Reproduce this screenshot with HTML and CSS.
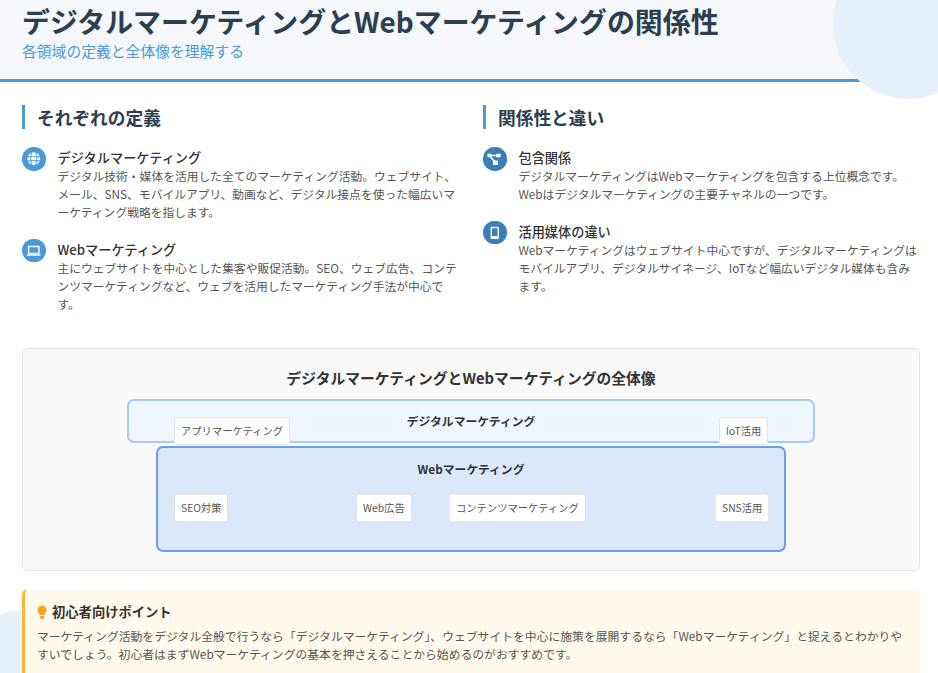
FILE: index.html
```html
<!DOCTYPE html>
<html lang="ja">
<head>
<meta charset="utf-8">
<title>デジタルマーケティングとWebマーケティングの関係性</title>
<link rel="stylesheet" href="styles.css">
</head>
<body>
<div class="slide">
  <div class="deco deco-top"></div>
  <div class="deco deco-bottom"></div>
  <header class="header">
    <h1 class="title">デジタルマーケティングとWebマーケティングの関係性</h1>
    <p class="subtitle">各領域の定義と全体像を理解する</p>
  </header>
  <main class="content">
    <div class="columns">
      <section>
        <h2 class="section-title">それぞれの定義</h2>
        <div class="item">
          <span class="icon">
            <svg viewBox="0 0 24 24"><circle cx="12" cy="12" r="6.600" fill="#fff"/><path fill="none" stroke="#4a9ad9" stroke-width="1" d="M5.300 10h13.400M5.300 14h13.400M10 5.500c-1.500 4-1.500 9 0 13M14 5.500c1.500 4 1.500 9 0 13"/></svg>
          </span>
          <div class="item-body">
            <h3 class="item-title">デジタルマーケティング</h3>
            <p class="item-text">デジタル技術・媒体を活用した全てのマーケティング活動。ウェブサイト、メール、SNS、モバイルアプリ、動画など、デジタル接点を使った幅広いマーケティング戦略を指します。</p>
          </div>
        </div>
        <div class="item">
          <span class="icon">
            <svg viewBox="0 0 24 24"><path fill="#fff" fill-rule="evenodd" d="M7 7h10a1 1 0 0 1 1 1v7H6V8a1 1 0 0 1 1-1zm.500 1.500V14h9V8.500zM5 15.500h14v.700a1 1 0 0 1-1 1H6a1 1 0 0 1-1-1z"/></svg>
          </span>
          <div class="item-body">
            <h3 class="item-title">Webマーケティング</h3>
            <p class="item-text">主にウェブサイトを中心とした集客や販促活動。SEO、ウェブ広告、コンテンツマーケティングなど、ウェブを活用したマーケティング手法が中心です。</p>
          </div>
        </div>
      </section>
      <section>
        <h2 class="section-title">関係性と違い</h2>
        <div class="item">
          <span class="icon icon-dark">
            <svg viewBox="0 0 24 24"><path fill="#fff" d="M4.500 6.800h4.300v3.700H4.500zM13.500 6.800h4.500v3.700h-4.500zM10.300 13.700h4.900v4.800h-4.900z"/><path fill="none" stroke="#fff" stroke-width="1.600" d="M8 8.600h6M7.500 10l4 4.500"/></svg>
          </span>
          <div class="item-body">
            <h3 class="item-title">包含関係</h3>
            <p class="item-text">デジタルマーケティングはWebマーケティングを包含する上位概念です。Webはデジタルマーケティングの主要チャネルの一つです。</p>
          </div>
        </div>
        <div class="item">
          <span class="icon icon-dark">
            <svg viewBox="0 0 24 24"><path fill="#fff" fill-rule="evenodd" d="M9 5.800h6a1.300 1.300 0 0 1 1.300 1.300v10a1.300 1.300 0 0 1-1.300 1.300H9a1.300 1.300 0 0 1-1.300-1.300v-10A1.300 1.300 0 0 1 9 5.800zm.100 1.700v7.800h5.800V7.500z"/></svg>
          </span>
          <div class="item-body">
            <h3 class="item-title">活用媒体の違い</h3>
            <p class="item-text">Webマーケティングはウェブサイト中心ですが、デジタルマーケティングはモバイルアプリ、デジタルサイネージ、IoTなど幅広いデジタル媒体も含みます。</p>
          </div>
        </div>
      </section>
    </div>

    <section class="panel">
      <h2 class="panel-title">デジタルマーケティングとWebマーケティングの全体像</h2>
      <div class="diagram">
        <div class="area area-outer">デジタルマーケティング</div>
        <div class="area area-inner">Webマーケティング</div>
        <span class="tag tag-app">アプリマーケティング</span>
        <span class="tag tag-iot">IoT活用</span>
        <span class="tag tag-seo">SEO対策</span>
        <span class="tag tag-ad">Web広告</span>
        <span class="tag tag-content">コンテンツマーケティング</span>
        <span class="tag tag-sns">SNS活用</span>
      </div>
    </section>

    <aside class="tip">
      <h3 class="tip-title">
        <svg viewBox="0 0 10 15" width="10" height="15"><path fill="#f6a623" d="M5 .500a4.500 4.500 0 0 1 4.500 4.500c0 2-1.500 3-2 5h-5c-.500-2-2-3-2-5A4.500 4.500 0 0 1 5 .500z"/><path fill="#f6a623" d="M2.800 11h4.400v1.300L6 14H4l-1.200-1.700z"/></svg>
        初心者向けポイント
      </h3>
      <p class="tip-text">マーケティング活動をデジタル全般で行うなら「デジタルマーケティング」、ウェブサイトを中心に施策を展開するなら「Webマーケティング」と捉えるとわかりやすいでしょう。初心者はまずWebマーケティングの基本を押さえることから始めるのがおすすめです。</p>
    </aside>
  </main>
</div>
</body>
</html>
```
FILE: styles.css
```css
* { box-sizing: border-box; margin: 0; padding: 0; }
html, body { height: 673px; overflow: hidden; background: #fff; }
body { font-family: "Noto Sans CJK JP", "Noto Sans", sans-serif; color: #333; }
.slide { position: relative; height: 673px; overflow: hidden; }
.deco { position: absolute; border-radius: 50%; background: #e6f1fb; z-index: 1; }
.deco-top { width: 150px; height: 150px; top: -51px; left: 833px; }
.deco-bottom { width: 100px; height: 100px; top: 610px; left: -28px; z-index: 0; }

.header { height: 82px; padding: 0 22px; background: #f5f7fb; border-bottom: 3px solid #4a9ad9; }
.title { font-size: 27.920px; line-height: 42px; font-weight: 700; color: #2c3e50; }
.subtitle { font-size: 14.800px; line-height: 20px; color: #4a9ad9; margin-top: -1px; }

.content { position: relative; z-index: 2; padding: 23px 18px 0 22px; }
.columns { display: grid; grid-template-columns: 1fr 1fr; gap: 24px; height: 243px; }
.section-title { font-size: 17.700px; line-height: 24px; font-weight: 700; color: #2c3e50; border-left: 3px solid #4a9ad9; padding-left: 12px; margin-bottom: 18px; }
.item { display: flex; gap: 12px; margin-bottom: 17.500px; }
.icon { flex: none; width: 23.500px; height: 23.500px; border-radius: 50%; background: #4a9ad9; }
.icon svg { display: block; width: 100%; height: 100%; }
.icon-dark { background: #3a7fb8; }
.item-title { font-size: 13.200px; line-height: 19px; font-weight: 500; color: #333; margin-top: 1px; }
.item-text { font-size: 11.780px; line-height: 18px; color: #555; }

.panel { height: 223px; background: #f9f9f9; border: 1px solid #e5e5e5; border-radius: 6px; padding: 19px 0 0; }
.panel-title { font-size: 14.800px; line-height: 20px; font-weight: 700; text-align: center; color: #333; }
.diagram { position: relative; height: 160px; margin-top: 11px; }
.area { position: absolute; font-size: 11.800px; font-weight: 700; text-align: center; color: #333; }
.area-outer { left: 104px; top: 0; width: 688px; height: 44px; padding-top: 11px; line-height: 18px; background: #eff6ff; border: 2px solid #a6cbfb; border-radius: 7px; }
.area-inner { left: 133px; top: 47px; width: 630px; height: 106px; padding-top: 12px; line-height: 18px; background: #dbe8fc; border: 2px solid #6d9bf1; border-radius: 7px; }
.tag { position: absolute; height: 28px; line-height: 26px; padding: 0 6px; font-size: 10.300px; color: #555; white-space: nowrap; background: #fff; border: 1px solid #e5e5e5; border-radius: 3px; }
.tag-app { left: 151px; top: 18px; }
.tag-iot { left: 696px; top: 18px; }
.tag-seo { left: 151px; top: 95px; }
.tag-ad { left: 333px; top: 95px; }
.tag-content { left: 426px; top: 95px; }
.tag-sns { left: 692px; top: 95px; }

.tip { margin-top: 18px; height: 100px; background: #fffaeb; border-left: 3px solid #f6b73c; border-radius: 6px; padding: 12px 12px; }
.tip-title { display: flex; align-items: center; gap: 5px; font-size: 13.300px; line-height: 22px; font-weight: 700; color: #333; }
.tip-text { font-size: 11.820px; line-height: 18px; color: #555; margin-top: 4px; }
```
